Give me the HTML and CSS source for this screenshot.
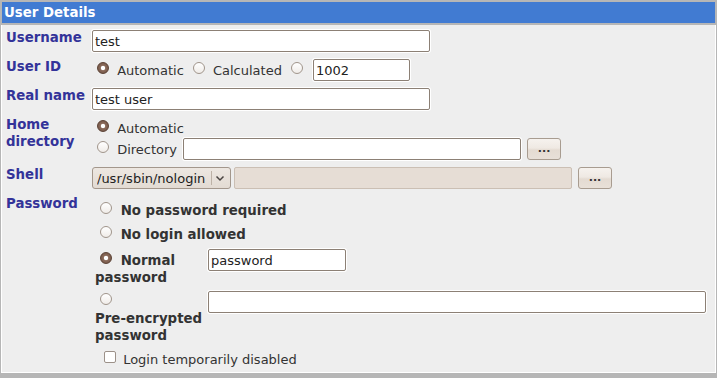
FILE: index.html
```html
<!DOCTYPE html>
<html lang="en">
<head>
    <meta charset="UTF-8">
    <meta name="viewport" content="width=device-width, initial-scale=1.0">
    <title>User Details</title>
    <link rel="stylesheet" href="styles.css">
</head>
<body>
    <div class="panel">
        <div class="panel-head">User Details</div>
        <div class="panel-body">
            <div class="field-label">Username</div>
            <div class="field-value">
                <input type="text" class="text-input wide" value="test">
            </div>

            <div class="field-label">User ID</div>
            <div class="field-value inline-row">
                <label class="opt"><input type="radio" name="uid" checked> Automatic</label>
                <label class="opt"><input type="radio" name="uid"> Calculated</label>
                <label class="opt"><input type="radio" name="uid"></label>
                <input type="text" class="text-input uid" value="1002">
            </div>

            <div class="field-label">Real name</div>
            <div class="field-value">
                <input type="text" class="text-input wide" value="test user">
            </div>

            <div class="field-label">Home directory</div>
            <div class="field-value">
                <label class="opt home-auto"><input type="radio" name="home" checked> Automatic</label>
                <div class="inline-row home-dir">
                    <label class="opt"><input type="radio" name="home"> Directory</label>
                    <input type="text" class="text-input wide after-label">
                    <button class="dots-btn">...</button>
                </div>
            </div>

            <div class="field-label">Shell</div>
            <div class="field-value inline-row">
                <span class="select-wrap">
                    <select class="shell-select">
                        <option>/usr/sbin/nologin</option>
                        <option>/bin/bash</option>
                        <option>/bin/sh</option>
                    </select>
                    <svg class="select-arrow" width="22" height="22" viewBox="0 0 22 22">
                        <line x1="2.5" y1="4" x2="2.5" y2="18" stroke="#bdb2a7" stroke-width="1"/>
                        <polyline points="7.5,9.5 11,13 14.5,9.5" fill="none" stroke="#4a4542" stroke-width="1.5"/>
                    </svg>
                </span>
                <input type="text" class="text-input wide shell-other" disabled>
                <button class="dots-btn">...</button>
            </div>

            <div class="field-label">Password</div>
            <div class="field-value pw-opts">
                <label class="pw-opt pw-first"><input type="radio" name="pass"> No password required</label>
                <label class="pw-opt pw-second"><input type="radio" name="pass"> No login allowed</label>
                <div class="pw-row pw-normal">
                    <label class="pw-opt pw-wrap"><input type="radio" name="pass" checked> Normal password</label>
                    <input type="text" class="text-input pw-short" value="password">
                </div>
                <div class="pw-row pw-crypt">
                    <label class="pw-opt pw-wrap"><input type="radio" name="pass"> <span class="nowrap">Pre-encrypted</span> password</label>
                    <input type="text" class="text-input pw-long">
                </div>
                <label class="check-opt"><input type="checkbox"> Login temporarily disabled</label>
            </div>
        </div>
    </div>
</body>
</html>
```

FILE: styles.css
```css
body {
    margin: 0;
    font-family: "DejaVu Sans", sans-serif;
    font-size: 13px;
    color: #333;
    background: #fff;
}
.panel {
    border: 1px solid #b6b6b6;
    border-bottom-width: 5px;
}
.panel-head {
    background-color: #417bd2;
    color: #fff;
    font-size: 13.33px;
    font-weight: bold;
    line-height: 15px;
    padding: 3px 2px;
    border: 1px solid #b6b6b6;
    border-bottom-width: 2px;
}
.panel-body {
    display: grid;
    grid-template-columns: 86px 1fr;
    row-gap: 7px;
    padding: 5px 6px 4px 4px;
    background-color: #eeeeee;
    border: 1px solid #fff;
    border-top: 0;
}
.field-label {
    color: #333399;
    font-size: 13.33px;
    font-weight: bold;
    line-height: 17px;
    margin-top: -1px;
}
.inline-row {
    display: flex;
    align-items: center;
    gap: 4px;
}
.opt {
    line-height: 17px;
}
.home-auto {
    display: block;
    margin-top: 3px;
}
.home-dir {
    margin-top: 1px;
}
.text-input {
    box-sizing: border-box;
    height: 22px;
    margin: 0;
    padding: 1px 2px;
    border: 1px solid #8c8075;
    border-radius: 2px;
    background: #fff;
    box-shadow: 0 0 0 1px #fff;
    font-family: "DejaVu Sans", sans-serif;
    font-size: 13px;
    color: #222;
}
.wide {
    width: 338px;
}
.uid {
    width: 97px;
    margin-left: 2px;
}
.after-label {
    margin-left: 2px;
}
.text-input:disabled {
    background: #e6ddd5;
    border-color: #cbbfb4;
    box-shadow: none;
}
.shell-other {
    margin-left: -1px;
}
.dots-btn {
    box-sizing: border-box;
    width: 34px;
    height: 22px;
    margin-left: 2px;
    padding: 0 0 2px;
    border: 1px solid #a89c90;
    border-radius: 3px;
    background: linear-gradient(#f6f2ee, #efe9e3 45%, #e4dbd2 55%, #e8e0d8);
    font-family: "DejaVu Sans", sans-serif;
    font-size: 11px;
    font-weight: bold;
    color: #333;
    cursor: pointer;
}
.select-wrap {
    position: relative;
    display: inline-flex;
}
.shell-select {
    appearance: none;
    box-sizing: border-box;
    width: 139px;
    height: 22px;
    margin: 0;
    padding: 0 0 0 4px;
    border: 1px solid #a3978c;
    border-radius: 3px;
    background: linear-gradient(#ede7e1, #e3dbd3);
    font-family: "DejaVu Sans", sans-serif;
    font-size: 13px;
    color: #222;
}
.select-arrow {
    position: absolute;
    top: 0;
    right: 0;
    pointer-events: none;
}
input[type=radio] {
    appearance: none;
    box-sizing: border-box;
    width: 12px;
    height: 12px;
    margin: 0 4px 0 5px;
    border: 1px solid #a0958b;
    border-radius: 50%;
    background: linear-gradient(#fff, #f0ece8);
    vertical-align: 1px;
}
input[type=radio]:checked {
    border-color: #5b4134;
    background: radial-gradient(circle, #fff 0 1.8px, #8b6b5b 2.6px, #6c4f40 100%);
}
input[type=checkbox] {
    appearance: none;
    box-sizing: border-box;
    width: 12px;
    height: 12px;
    margin: 0 3px 0 9px;
    border: 1px solid #9c9189;
    border-radius: 2px;
    background: #fff;
    vertical-align: 1px;
}
.pw-opts {
    display: flex;
    flex-direction: column;
    align-items: flex-start;
    padding: 0 3px;
}
.pw-opt {
    font-size: 13.33px;
    font-weight: bold;
    line-height: 17px;
}
.nowrap {
    white-space: nowrap;
}
.pw-first {
    margin-top: 6px;
}
.pw-second {
    margin-top: 7px;
}
.pw-row {
    display: flex;
    align-items: baseline;
    align-self: stretch;
}
.pw-normal {
    margin-top: 6px;
}
.pw-crypt {
    margin-top: 5px;
}
.pw-wrap {
    width: 110px;
    flex-shrink: 0;
}
.pw-short {
    width: 138px;
    margin-left: 3px;
}
.pw-long {
    flex: 1;
    margin-left: 3px;
}
.check-opt {
    line-height: 17px;
    margin-top: 7px;
}
```
